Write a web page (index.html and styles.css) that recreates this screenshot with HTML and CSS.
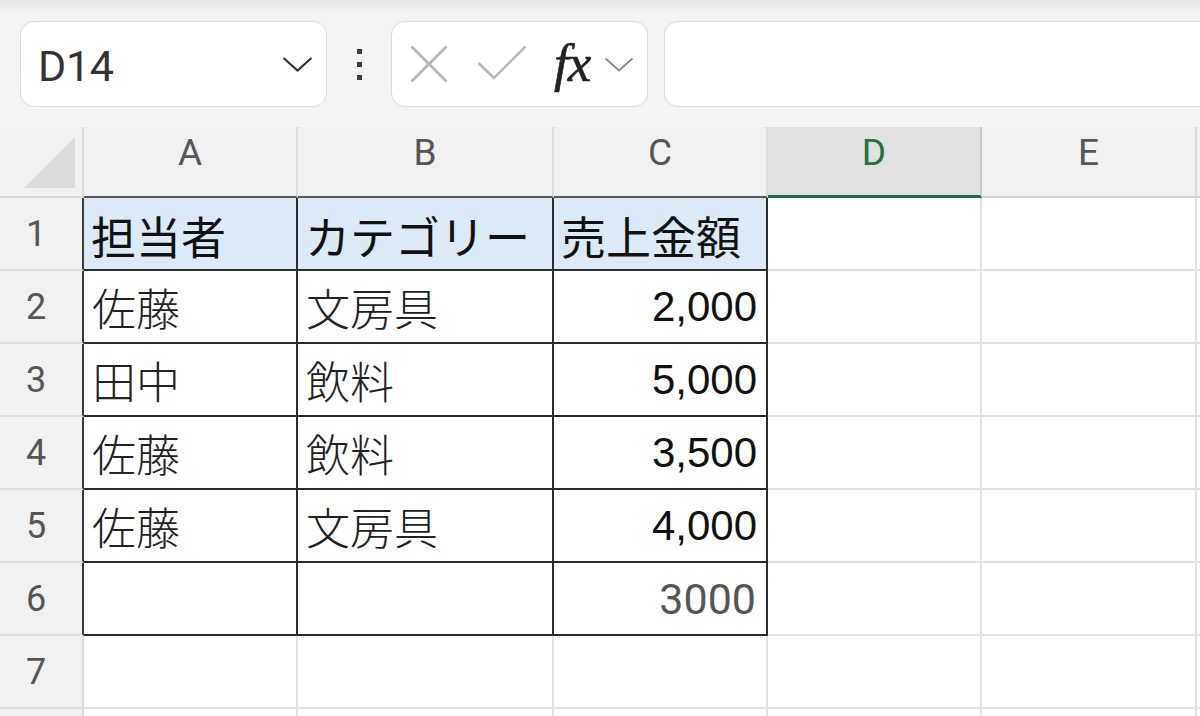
FILE: index.html
```html
<!DOCTYPE html>
<html lang="ja">
<head>
<meta charset="utf-8">
<title>Sheet</title>
<link rel="stylesheet" href="styles.css">
</head>
<body>
<div class="app">
  <div class="toolbar">
    <div class="namebox">
      <span class="ref">D14</span>
      <svg class="chev" width="31" height="16" viewBox="0 0 31 16"><polyline points="1.5,2 15.5,14.5 29.5,2" fill="none" stroke="#333" stroke-width="2.2"/></svg>
    </div>
    <div class="dots"><span></span><span></span><span></span></div>
    <div class="fxbox">
      <svg class="ic-x" width="38" height="38" viewBox="0 0 38 38"><path d="M1.5 1.5 L36.5 36.5 M36.5 1.5 L1.5 36.5" stroke="#b4b4b4" stroke-width="2.6" fill="none"/></svg>
      <svg class="ic-ok" width="50" height="36" viewBox="0 0 50 36"><polyline points="1.5,18 17,33 48.5,1.5" fill="none" stroke="#b8b8b8" stroke-width="2.6"/></svg>
      <span class="fx">fx</span>
      <svg class="chev2" width="30" height="15" viewBox="0 0 30 15"><polyline points="1.5,1.5 15,13.5 28.5,1.5" fill="none" stroke="#8a8a8a" stroke-width="1.8"/></svg>
    </div>
    <div class="formula"></div>
  </div>

  <div class="sheet">
    <div class="corner"><svg width="51" height="51" viewBox="0 0 51 51"><polygon points="51,0 51,51 0,51" fill="#dcdcdc"/></svg></div>
    <div class="ch tb">A</div>
    <div class="ch tb">B</div>
    <div class="ch tb">C</div>
    <div class="ch sel">D</div>
    <div class="ch">E</div>
    <div class="ch rest"></div>

    <div class="rh tb">1</div>
    <div class="c t hd">担当者</div>
    <div class="c t hd">カテゴリー</div>
    <div class="c t hd">売上金額</div>
    <div class="c"></div>
    <div class="c"></div>
    <div class="c rest"></div>

    <div class="rh tb">2</div>
    <div class="c t">佐藤</div>
    <div class="c t">文房具</div>
    <div class="c t num">2,000</div>
    <div class="c"></div>
    <div class="c"></div>
    <div class="c rest"></div>

    <div class="rh tb">3</div>
    <div class="c t">田中</div>
    <div class="c t">飲料</div>
    <div class="c t num">5,000</div>
    <div class="c"></div>
    <div class="c"></div>
    <div class="c rest"></div>

    <div class="rh tb">4</div>
    <div class="c t">佐藤</div>
    <div class="c t">飲料</div>
    <div class="c t num">3,500</div>
    <div class="c"></div>
    <div class="c"></div>
    <div class="c rest"></div>

    <div class="rh tb">5</div>
    <div class="c t">佐藤</div>
    <div class="c t">文房具</div>
    <div class="c t num">4,000</div>
    <div class="c"></div>
    <div class="c"></div>
    <div class="c rest"></div>

    <div class="rh tb">6</div>
    <div class="c t"></div>
    <div class="c t"></div>
    <div class="c t plain">3000</div>
    <div class="c"></div>
    <div class="c"></div>
    <div class="c rest"></div>

    <div class="rh">7</div>
    <div class="c"></div>
    <div class="c"></div>
    <div class="c"></div>
    <div class="c"></div>
    <div class="c"></div>
    <div class="c rest"></div>

    <div class="rh"></div>
    <div class="c"></div>
    <div class="c"></div>
    <div class="c"></div>
    <div class="c"></div>
    <div class="c"></div>
    <div class="c rest"></div>
  </div>
</div>
</body>
</html>
```

FILE: styles.css
```css
* { box-sizing: border-box; }
html, body {
  margin: 0;
  padding: 0;
  width: 1200px;
  height: 716px;
  overflow: hidden;
  background: #ffffff;
  font-family: Roboto, "Noto Sans", "Noto Sans CJK JP", sans-serif;
}
.app {
  width: 1200px;
  height: 716px;
  overflow: hidden;
}
.toolbar {
  height: 127px;
  display: flex;
  align-items: center;
  padding: 0 0 0 20px;
  background: linear-gradient(#e6e6e6 0px, #f3f3f3 14px, #f4f4f4 100%);
  overflow: hidden;
}
.namebox {
  flex: none;
  width: 307px;
  height: 86px;
  background: #fff;
  border: 1px solid #d9d9d9;
  border-radius: 14px;
  display: flex;
  align-items: center;
  padding: 0 13px 0 17px;
}
.ref {
  font-family: Roboto, "Noto Sans", sans-serif;
  font-size: 43px;
  color: #333;
  letter-spacing: -0.3px;
  line-height: 1;
  padding-top: 6px;
}
.chev { margin-left: auto; }
.dots {
  flex: none;
  width: 64px;
  display: flex;
  flex-direction: column;
  align-items: center;
  gap: 8px;
  padding-top: 2px;
}
.dots span {
  width: 5px;
  height: 5px;
  background: #3c3c3c;
}
.fxbox {
  flex: none;
  width: 257px;
  height: 86px;
  background: #fff;
  border: 1px solid #d9d9d9;
  border-radius: 14px;
  display: flex;
  align-items: center;
  padding: 0 0 0 18px;
}
.ic-x { margin-top: 1px; }
.ic-ok { margin-left: 29px; margin-top: -2px; }
.fx {
  font-family: "Liberation Serif", "Times New Roman", serif;
  font-style: italic;
  font-size: 53px;
  color: #222;
  margin-left: 27px;
  line-height: 1;
  letter-spacing: -1px;
  -webkit-text-stroke: 0.6px #222;
}
.chev2 { margin-left: 14px; margin-top: 2px; }
.formula {
  flex: none;
  width: 600px;
  height: 86px;
  margin-left: 16px;
  background: #fff;
  border: 1px solid #d9d9d9;
  border-radius: 14px;
}

.sheet {
  display: grid;
  grid-template-columns: 84px 214px 256px 214px 214px 215px 1fr;
  grid-template-rows: 71px repeat(7, 73px) 40px;
}
.corner {
  background: #f1f1f1;
  border-right: 2px solid #dadada;
  border-bottom: 2px solid #dadada;
  display: flex;
  align-items: flex-end;
  justify-content: flex-end;
  padding: 0 7px 8px 0;
}
.ch {
  background: #f1f1f1;
  border-right: 2px solid #dadada;
  border-bottom: 2px solid #d0d0d0;
  color: #555;
  font-size: 37px;
  display: flex;
  align-items: center;
  justify-content: center;
  padding-bottom: 18px;
}
.ch.tb { border-bottom-color: #5a5a5a; }
.ch.sel {
  background: #e1e1e1;
  color: #217346;
  border-bottom: 3px solid #1e6b40;
  border-right-color: #c8c8c8;
}
.rh {
  background: #f1f1f1;
  border-right: 2px solid #dadada;
  border-bottom: 2px solid #dedede;
  color: #555;
  font-size: 36px;
  display: flex;
  align-items: center;
  justify-content: center;
  padding-right: 10px;
}
.rh.tb { border-right-color: #3a3a3a; }
.c {
  border-right: 2px solid #e1e1e1;
  border-bottom: 2px solid #e1e1e1;
  display: flex;
  align-items: center;
  padding: 0 9px 0 8px;
  font-family: "Noto Sans CJK JP", "Noto Sans", sans-serif;
  font-size: 44px;
  font-weight: 300;
  color: #222;
  white-space: nowrap;
  overflow: hidden;
}
.c.t {
  border-right-color: #2b2b2b;
  border-bottom-color: #2b2b2b;
}
.c.hd {
  background: #dce9f7;
  color: #111;
  font-weight: 400;
  font-size: 45px;
  padding-left: 7px;
  padding-top: 4px;
}
.c.num {
  justify-content: flex-end;
  font-family: "Liberation Sans", Arial, sans-serif;
  font-size: 42px;
  font-weight: 400;
  color: #111;
}
.c.plain {
  justify-content: flex-end;
  font-family: Roboto, "Noto Sans", sans-serif;
  font-size: 43px;
  font-weight: 400;
  color: #555;
  padding-right: 10px;
}
.rest { border-right: none; }
```
